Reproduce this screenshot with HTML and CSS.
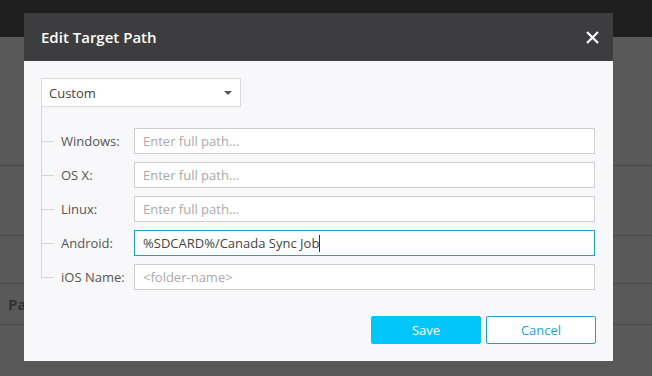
FILE: index.html
```html
<!DOCTYPE html>
<html lang="en">
<head>
    <meta charset="UTF-8">
    <meta name="viewport" content="width=device-width, initial-scale=1.0">
    <title>Edit Target Path</title>
    <link rel="stylesheet" href="styles.css">
</head>
<body>
<!-- page behind the dialog -->
<div class="page">
    <div class="topbar"></div>
    <div class="page-row row-a"></div>
    <div class="page-row row-b"></div>
    <div class="page-row row-c"></div>
    <div class="page-row row-d"><span class="page-text">Path</span></div>
    <div class="page-row row-e"></div>
</div>

<div class="modal">
    <div class="modal-header">
        <h2 class="modal-title">Edit Target Path</h2>
        <button class="close-button" type="button">
            <svg width="13" height="13" viewBox="0 0 13 13">
                <path d="M1 1 L12 12 M12 1 L1 12" stroke="#ffffff" stroke-width="2.2"/>
            </svg>
        </button>
    </div>

    <div class="modal-body">
        <div class="select-box">
            <span>Custom</span>
            <span class="select-arrow"></span>
        </div>

        <div class="path-tree">
            <div class="path-row">
                <label class="path-label" for="winPath">Windows:</label>
                <input class="path-input" type="text" id="winPath" placeholder="Enter full path...">
            </div>
            <div class="path-row">
                <label class="path-label" for="osxPath">OS X:</label>
                <input class="path-input" type="text" id="osxPath" placeholder="Enter full path...">
            </div>
            <div class="path-row">
                <label class="path-label" for="linuxPath">Linux:</label>
                <input class="path-input" type="text" id="linuxPath" placeholder="Enter full path...">
            </div>
            <div class="path-row">
                <label class="path-label" for="androidPath">Android:</label>
                <div class="path-input focused">%SDCARD%/Canada Sync Job<span class="caret"></span></div>
            </div>
            <div class="path-row">
                <label class="path-label" for="iosName">iOS Name:</label>
                <input class="path-input" type="text" id="iosName" placeholder="<folder-name>">
            </div>
        </div>

        <div class="modal-footer">
            <button class="btn btn-save" type="button">Save</button>
            <button class="btn btn-cancel" type="button">Cancel</button>
        </div>
    </div>
</div>
</body>
</html>
```

FILE: styles.css
```css
body {
    margin: 0;
    font-family: "Open Sans", "Noto Sans", sans-serif;
    background-color: #595959;
    overflow: hidden;
}

.page {
    height: 376px;
}

.topbar {
    height: 37px;
    background-color: #1f1f1f;
}

.page-row {
    border-bottom: 1px solid #4c4c4c;
}

.row-a { height: 128px; }
.row-b { height: 69px; }
.row-c { height: 47px; }
.row-d {
    height: 40px;
    display: flex;
    align-items: center;
    padding-left: 8px;
}
.row-e { border-bottom: none; }

.page-text {
    font-size: 15px;
    font-weight: 700;
    color: #333333;
}

.modal {
    position: absolute;
    left: 24px;
    top: 13px;
    width: 589px;
    height: 348px;
    background-color: #f8f8fa;
}

.modal-header {
    height: 48px;
    background-color: #3d3d3f;
    display: flex;
    align-items: center;
    justify-content: space-between;
    padding: 0 14px 0 17px;
}

.modal-title {
    margin: 0;
    font-size: 15px;
    font-weight: 600;
    color: #ffffff;
}

.close-button {
    background: none;
    border: none;
    padding: 0;
    width: 13px;
    height: 13px;
    cursor: pointer;
}

.modal-body {
    padding: 17px 18px 17px 17px;
}

.select-box {
    box-sizing: border-box;
    width: 200px;
    height: 29px;
    border: 1px solid #dcdcdc;
    background-color: #ffffff;
    display: flex;
    align-items: center;
    justify-content: space-between;
    padding: 0 8px 0 7px;
    font-size: 13px;
    color: #444444;
}

.select-arrow {
    width: 0;
    height: 0;
    border-left: 4px solid transparent;
    border-right: 4px solid transparent;
    border-top: 4px solid #555555;
}

.path-tree {
    position: relative;
    display: flex;
    flex-direction: column;
    gap: 8px;
    padding-top: 21px;
}

.path-tree::before {
    content: "";
    position: absolute;
    left: 0;
    top: 0;
    bottom: 13px;
    width: 1px;
    background-color: #d6d6d8;
}

.path-row {
    display: flex;
    align-items: center;
    height: 26px;
}

.path-row::before {
    content: "";
    width: 13px;
    height: 1px;
    margin-right: 7px;
    background-color: #d6d6d8;
}

.path-label {
    width: 73px;
    font-size: 13px;
    color: #555555;
}

.path-input {
    box-sizing: border-box;
    flex: 1;
    height: 26px;
    border: 1px solid #cfcfcf;
    background-color: #ffffff;
    padding: 0 8px;
    font-family: inherit;
    font-size: 13px;
    color: #444444;
    outline: none;
}

.path-input::placeholder {
    color: #a9a9a9;
}

.path-input.focused {
    border-color: #17a5cf;
    display: flex;
    align-items: center;
}

.caret {
    display: inline-block;
    width: 1px;
    height: 17px;
    background-color: #333333;
}

.modal-footer {
    display: flex;
    justify-content: flex-end;
    gap: 5px;
    margin-top: 26px;
}

.btn {
    box-sizing: border-box;
    width: 110px;
    height: 28px;
    border-radius: 2px;
    font-family: inherit;
    font-size: 13px;
    cursor: pointer;
}

.btn-save {
    background-color: #00c6f9;
    border: 1px solid #00c6f9;
    color: #ffffff;
}

.btn-cancel {
    background-color: #ffffff;
    border: 1px solid #1aa2cf;
    color: #239fcd;
    margin-right: -1px;
}
```
